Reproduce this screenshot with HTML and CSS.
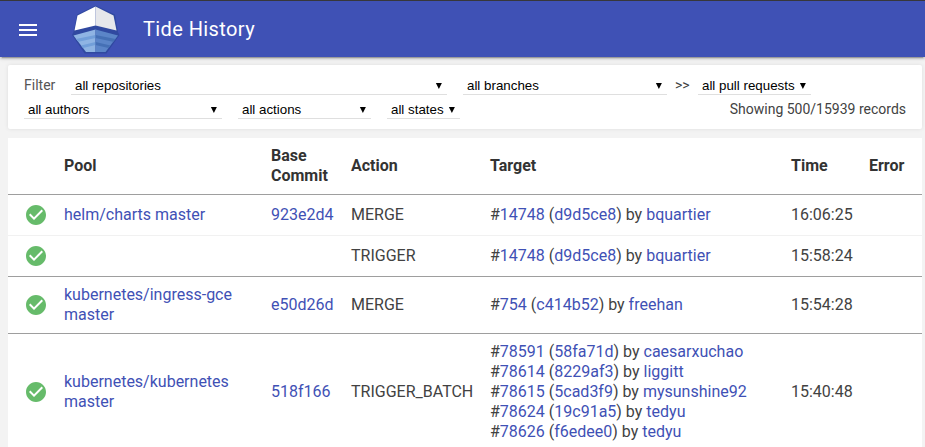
FILE: index.html
```html
<!DOCTYPE html>
<html lang="en">
<head>
<meta charset="utf-8">
<title>Tide History</title>
<link rel="stylesheet" href="styles.css">
</head>
<body>
<svg class="defs" width="0" height="0" aria-hidden="true">
  <symbol id="check" viewBox="0 0 24 24"><path d="M12 2C6.48 2 2 6.48 2 12s4.48 10 10 10 10-4.48 10-10S17.52 2 12 2zm-2 15l-5-5 1.41-1.41L10 14.17l7.59-7.59L19 8l-9 9z"/></symbol>
  <symbol id="arrow" viewBox="0 0 7 7"><path d="M.9 1h6L3.900 6.900z"/></symbol>
</svg>
<header class="header">
  <svg class="menu" viewBox="0 0 24 24"><path d="M3 18h18v-2H3v2zm0-5h18v-2H3v2zm0-7v2h18V6H3z"/></svg>
  <svg class="logo" viewBox="0 0 48 50">
    <path d="M23.500 .5 43 9.500 46 27 47.500 30 34.500 48.500H12.500L0 30 1.500 27 5 9.500z" fill="#3049a0"/>
    <path d="M23.500 1.500 5.500 10.500 2.500 25.500 23.500 20.500z" fill="#fff"/>
    <path d="M23.500 1.500 41.500 10.500 44.500 25.500 23.500 20.500z" fill="#e6e7eb"/>
    <path d="M23.500 24.500 1.500 30.500 14 47H23.500z" fill="#8fb4e3"/>
    <path d="M23.500 24.500 46 30.500 33.500 47H23.500z" fill="#5b85c8"/>
    <path d="M4 34 23.500 30v3L6.500 36.800zM9 40.500 23.500 37v3L11 43z" fill="#729fd9"/>
    <path d="M43.500 34 23.500 30v3L41 36.800zM38.500 40.500 23.500 37v3L36.500 43z" fill="#4570b5"/>
  </svg>
  <h1 class="title">Tide History</h1>
</header>
<main class="page">
  <section class="filters">
    <div class="filter-row">
      <span class="label">Filter</span>
      <div class="select repos">all repositories<svg><use href="#arrow"/></svg></div>
      <div class="select branches">all branches<svg><use href="#arrow"/></svg></div>
      <span class="sep">&gt;&gt;</span>
      <div class="select pulls">all pull requests<svg><use href="#arrow"/></svg></div>
    </div>
    <div class="filter-row">
      <div class="select authors">all authors<svg><use href="#arrow"/></svg></div>
      <div class="select actions">all actions<svg><use href="#arrow"/></svg></div>
      <div class="select states">all states<svg><use href="#arrow"/></svg></div>
      <span class="count">Showing 500/15939 records</span>
    </div>
  </section>
  <table class="history">
    <colgroup><col class="c-icon"><col class="c-pool"><col class="c-base"><col class="c-action"><col class="c-target"><col class="c-time"><col class="c-error"></colgroup>
    <thead>
      <tr><th></th><th>Pool</th><th>Base<br>Commit</th><th>Action</th><th>Target</th><th>Time</th><th>Error</th></tr>
    </thead>
    <tbody>
      <tr class="pool-start">
        <td class="state"><svg><use href="#check"/></svg></td>
        <td><a>helm/charts master</a></td><td><a>923e2d4</a></td><td>MERGE</td>
        <td>#<a>14748</a> (<a>d9d5ce8</a>) by <a>bquartier</a></td><td>16:06:25</td><td></td>
      </tr>
      <tr>
        <td class="state"><svg><use href="#check"/></svg></td>
        <td></td><td></td><td>TRIGGER</td>
        <td>#<a>14748</a> (<a>d9d5ce8</a>) by <a>bquartier</a></td><td>15:58:24</td><td></td>
      </tr>
      <tr class="pool-start">
        <td class="state"><svg><use href="#check"/></svg></td>
        <td><a>kubernetes/ingress-gce<br>master</a></td><td><a>e50d26d</a></td><td>MERGE</td>
        <td>#<a>754</a> (<a>c414b52</a>) by <a>freehan</a></td><td>15:54:28</td><td></td>
      </tr>
      <tr class="pool-start">
        <td class="state"><svg><use href="#check"/></svg></td>
        <td><a>kubernetes/kubernetes<br>master</a></td><td><a>518f166</a></td><td>TRIGGER_BATCH</td>
        <td>#<a>78591</a> (<a>58fa71d</a>) by <a>caesarxuchao</a><br>
          #<a>78614</a> (<a>8229af3</a>) by <a>liggitt</a><br>
          #<a>78615</a> (<a>5cad3f9</a>) by <a>mysunshine92</a><br>
          #<a>78624</a> (<a>19c91a5</a>) by <a>tedyu</a><br>
          #<a>78626</a> (<a>f6edee0</a>) by <a>tedyu</a></td>
        <td>15:40:48</td><td></td>
      </tr>
    </tbody>
  </table>
</main>
</body>
</html>
```
FILE: styles.css
```css
* { box-sizing: border-box; }
html, body { height: 100%; }
body {
  margin: 0;
  overflow: hidden;
  background: #f3f3f3;
  color: #424242;
  font-family: Roboto, "Liberation Sans", sans-serif;
}
.defs { display: block; }
.header {
  position: relative;
  display: flex;
  align-items: center;
  height: 57px;
  border-top: 1px solid #37373b;
  background: #3f51b5;
  color: #fff;
  box-shadow: 0 2px 2px rgba(0,0,0,.14), 0 3px 1px -2px rgba(0,0,0,.2), 0 1px 5px rgba(0,0,0,.12);
}
.menu { width: 24px; height: 24px; margin: 2px 0 0 16px; fill: #fff; }
.logo { width: 48px; height: 50px; margin: 2px 0 0 32px; }
.title { margin: 0 0 0 23px; font-size: 20px; font-weight: 400; line-height: 28px; letter-spacing: .4px; }
.page { padding: 8px 3px 0 8px; }
.filters {
  height: 64px;
  padding: 8px 16px;
  border-radius: 2px;
  background: #fff;
  font-size: 14px;
  box-shadow: 0 0 4px rgba(0,0,0,.09);
}
.filter-row { display: flex; height: 24px; line-height: 24px; }
.label { width: 47px; color: #555; }
.select {
  display: flex;
  justify-content: space-between;
  align-items: center;
  height: 22px;
  margin-right: 16px;
  padding: 4px 5px 0 4px;
  border-bottom: 1px solid #dfdfdf;
  color: #000;
  font: 13.333px/17px "Liberation Sans", sans-serif;
  white-space: nowrap;
}
.select svg { width: 7px; height: 7px; }
.repos { width: 376px; }
.branches { width: 204px; margin-right: 8px; }
.sep { width: 23px; font-size: 14px; }
.pulls { width: 113px; }
.authors { width: 198px; }
.actions { width: 133px; }
.states { width: 73px; }
.count { margin-left: auto; }
.history {
  width: 914px;
  margin-top: 9px;
  border-spacing: 0;
  table-layout: fixed;
  background: #fff;
  font-size: 16px;
  line-height: 20px;
}
.c-icon { width: 48px; }
.c-pool { width: 207px; }
.c-base { width: 80px; }
.c-action { width: 139px; }
.c-target { width: 301px; }
.c-time { width: 78px; }
.history th, .history td { padding: 8px 0 8px 8px; text-align: left; vertical-align: middle; white-space: nowrap; }
.history th { height: 56px; color: #333; font-weight: 700; }
.history td { height: 41px; border-top: 1px solid #f1f1f1; }
.history .pool-start td { border-top-color: #9e9e9e; }
.history .state { padding-left: 16px; }
.state svg { display: block; width: 24px; height: 24px; margin: -2px 0; fill: #66bb6a; }
.history a { color: #3f51b5; }
```
